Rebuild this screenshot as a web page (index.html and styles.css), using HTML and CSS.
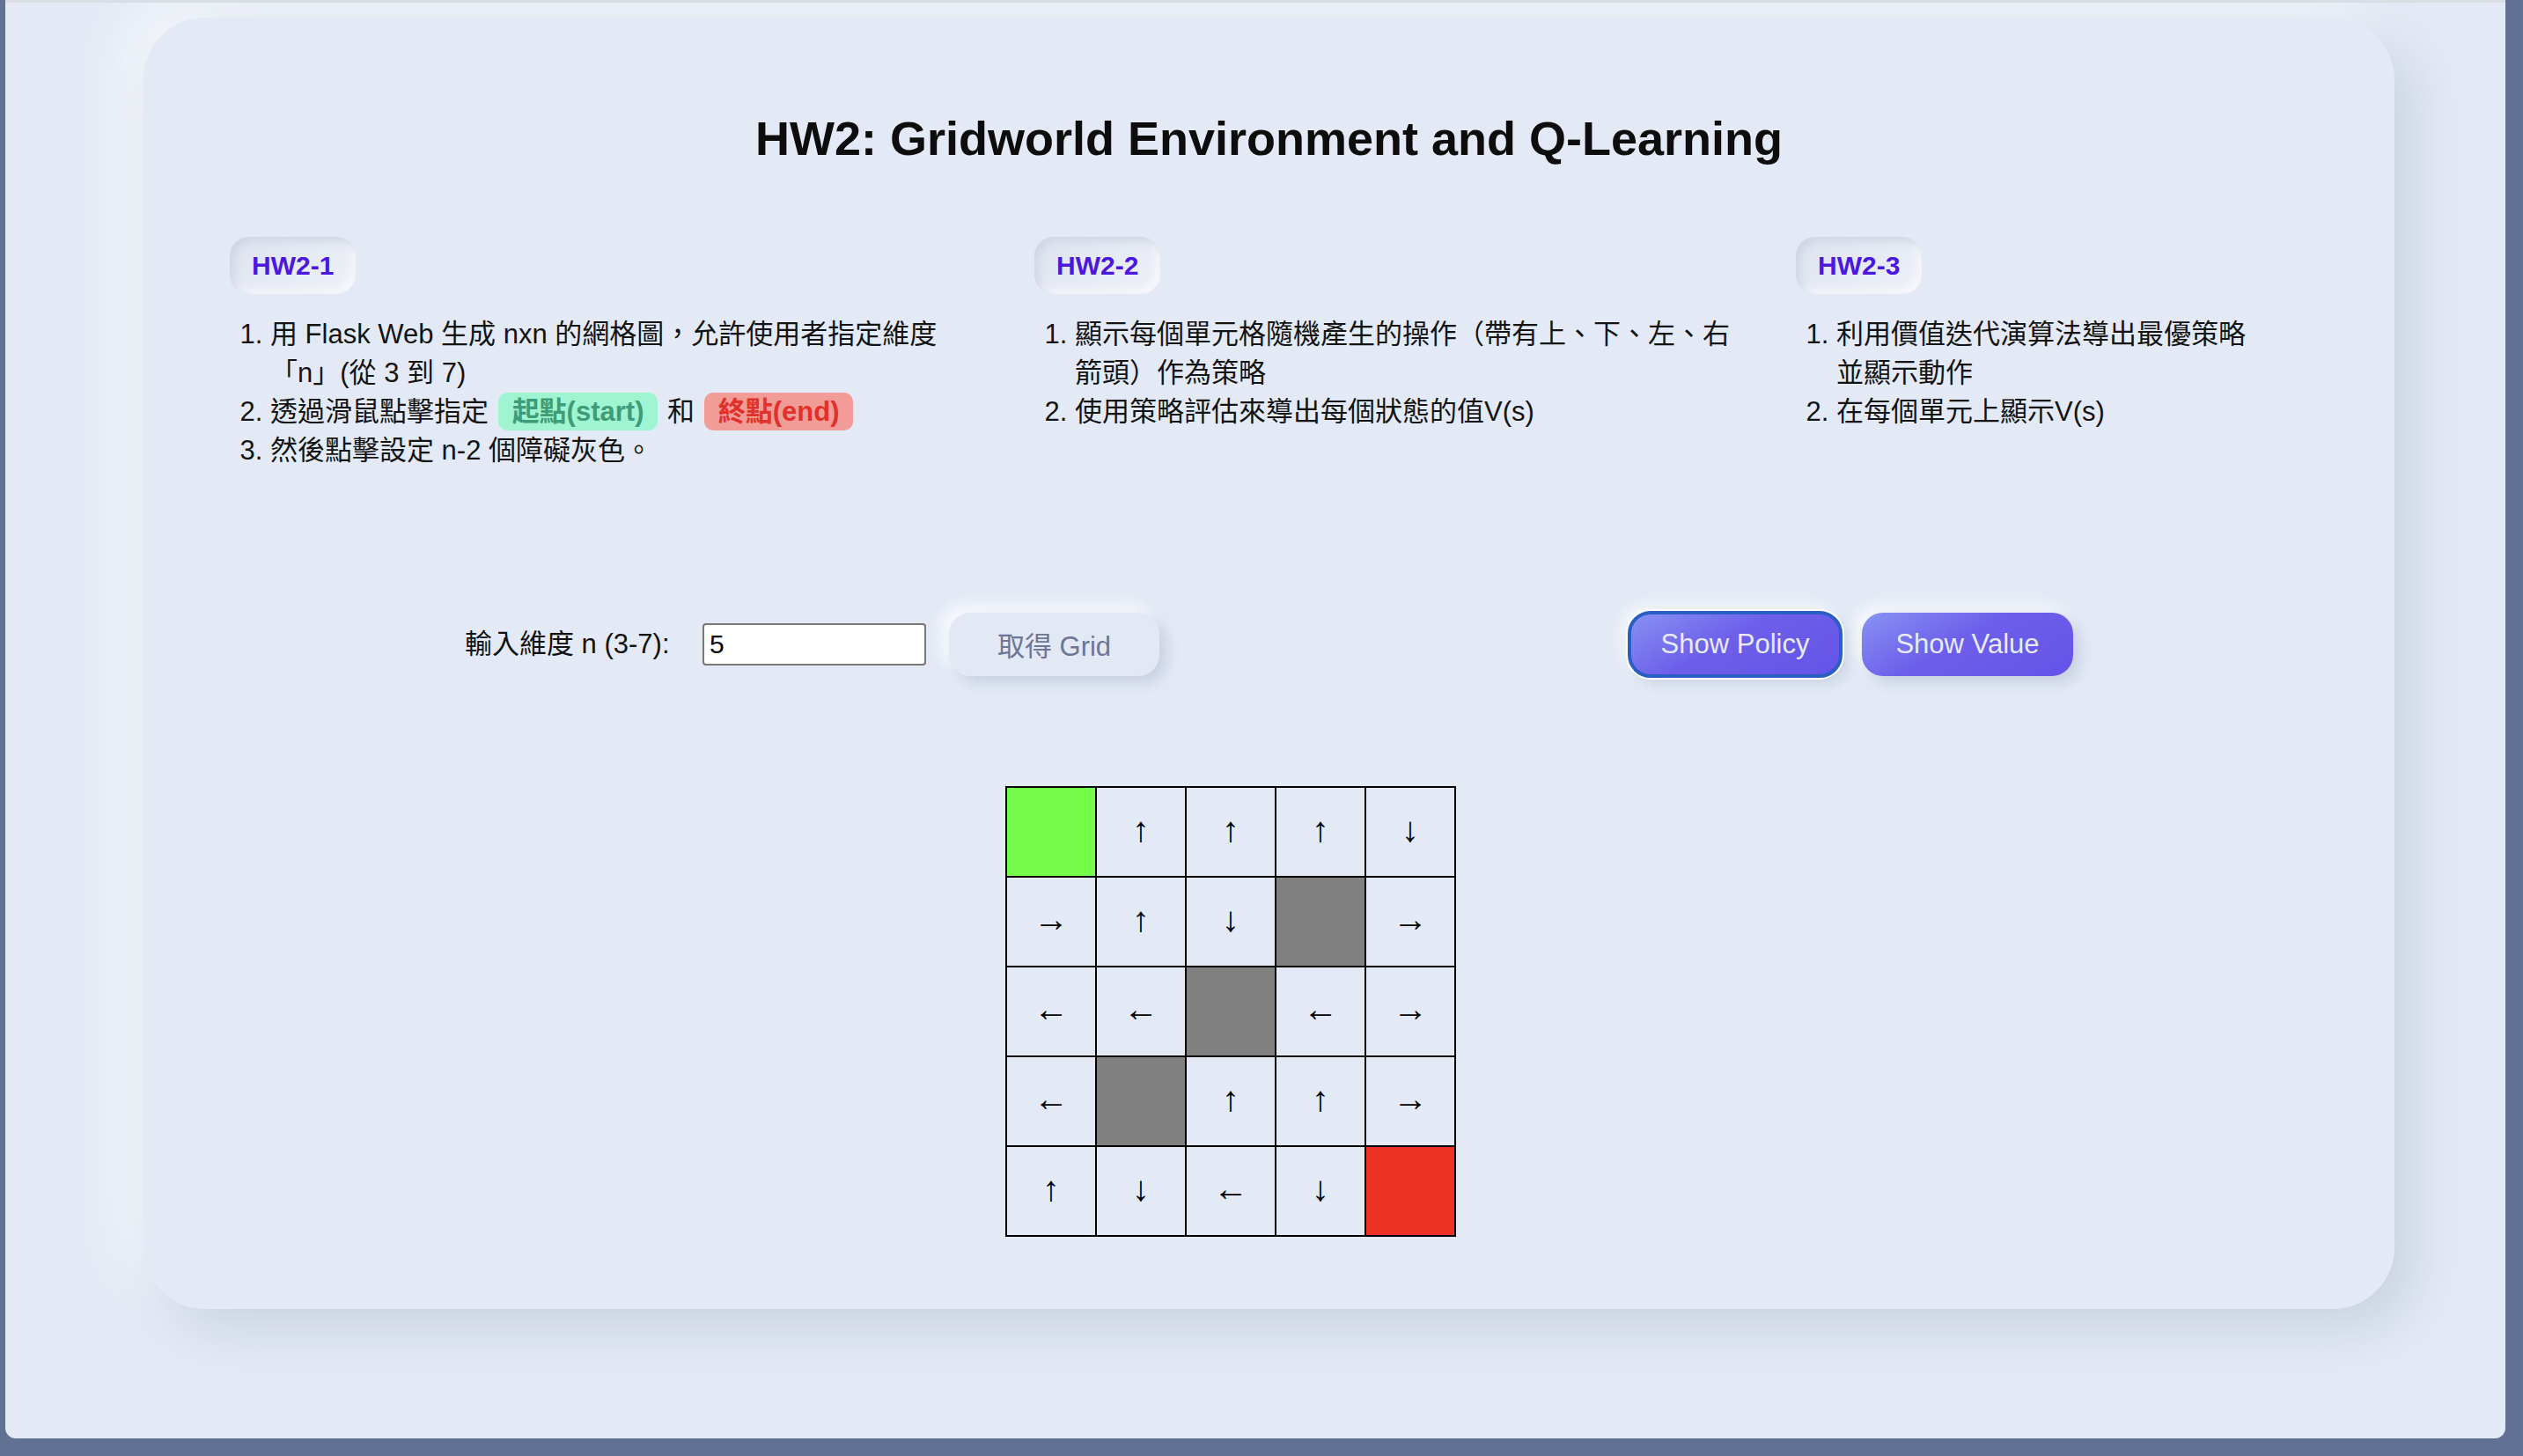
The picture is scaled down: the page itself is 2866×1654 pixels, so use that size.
FILE: index.html
```html
<!DOCTYPE html>
<html lang="zh-Hant">
<head>
<meta charset="utf-8">
<title>HW2: Gridworld Environment and Q-Learning</title>
<link rel="stylesheet" href="styles.css">
</head>
<body>
<div class="window">
  <main class="card">
    <h1 class="title">HW2: Gridworld Environment and Q-Learning</h1>

    <section class="tasks">
      <div class="task task--1">
        <span class="badge">HW2-1</span>
        <ol class="steps">
          <li>用 Flask Web 生成 nxn 的網格圖，允許使用者指定維度「n」(從 3 到 7)</li>
          <li>透過滑鼠點擊指定 <span class="pill pill--start">起點(start)</span> 和 <span class="pill pill--end">終點(end)</span></li>
          <li>然後點擊設定 n-2 個障礙灰色。</li>
        </ol>
      </div>
      <div class="task task--2">
        <span class="badge">HW2-2</span>
        <ol class="steps">
          <li>顯示每個單元格隨機產生的操作（帶有上、下、左、右箭頭）作為策略</li>
          <li>使用策略評估來導出每個狀態的值V(s)</li>
        </ol>
      </div>
      <div class="task task--3">
        <span class="badge">HW2-3</span>
        <ol class="steps">
          <li>利用價值迭代演算法導出最優策略並顯示動作</li>
          <li>在每個單元上顯示V(s)</li>
        </ol>
      </div>
    </section>

    <section class="controls">
      <div class="controls__group">
        <label class="dim-label" for="dim">輸入維度 n (3-7):</label>
        <input id="dim" class="dim-input" type="text" value="5">
        <button class="btn btn--soft" type="button">取得 Grid</button>
      </div>
      <div class="controls__group controls__group--actions">
        <button class="btn btn--primary btn--focused" type="button">Show Policy</button>
        <button class="btn btn--primary" type="button">Show Value</button>
      </div>
    </section>

    <div class="board-wrap">
      <div class="board">
        <div class="cell cell--start"></div>
        <div class="cell">↑</div>
        <div class="cell">↑</div>
        <div class="cell">↑</div>
        <div class="cell">↓</div>

        <div class="cell">→</div>
        <div class="cell">↑</div>
        <div class="cell">↓</div>
        <div class="cell cell--wall"></div>
        <div class="cell">→</div>

        <div class="cell">←</div>
        <div class="cell">←</div>
        <div class="cell cell--wall"></div>
        <div class="cell">←</div>
        <div class="cell">→</div>

        <div class="cell">←</div>
        <div class="cell cell--wall"></div>
        <div class="cell">↑</div>
        <div class="cell">↑</div>
        <div class="cell">→</div>

        <div class="cell">↑</div>
        <div class="cell">↓</div>
        <div class="cell">←</div>
        <div class="cell">↓</div>
        <div class="cell cell--end"></div>
      </div>
    </div>
  </main>
</div>
</body>
</html>
```

FILE: styles.css
```css
html, body {
  margin: 0;
  padding: 0;
}

body {
  height: 1654px;
  overflow: hidden;
  background: #607194;
  font-family: "Liberation Sans", "Noto Sans CJK TC", sans-serif;
  color: #111;
}

.window {
  box-sizing: border-box;
  width: 2840px;
  height: 1634px;
  margin-left: 6px;
  padding: 17px 0 0 157px;
  background: #e3eaf5;
  border-top: 3px solid #d9dde4;
  border-radius: 0 0 12px 12px;
  overflow: hidden;
}

.card {
  box-sizing: border-box;
  width: 2557px;
  height: 1467px;
  padding: 105px 98px 0;
  background: #e3eaf5;
  border-radius: 70px;
  box-shadow: 22px 22px 60px #c9d1e1, -22px -22px 60px #f6f8fc;
}

.title {
  margin: 0;
  font-size: 54px;
  line-height: 64px;
  font-weight: 700;
  text-align: center;
  color: #0d0d0d;
}

/* task columns */
.tasks {
  display: flex;
  margin-top: 80px;
}

.task {
  display: flex;
  flex-direction: column;
  align-items: flex-start;
}

.task--1 { width: 836px; margin-right: 78px; }
.task--2 { width: 806px; margin-right: 59px; }
.task--3 { width: 526px; }

.badge {
  box-sizing: border-box;
  height: 65px;
  padding: 0 25px;
  line-height: 65px;
  border-radius: 22px;
  font-size: 30px;
  font-weight: 700;
  color: #4b18e0;
  background: linear-gradient(145deg, #dde3ef, #eef1f8);
  box-shadow: inset 5px 5px 10px #d0d6e4, inset -5px -5px 10px #f7f8fc;
}

.steps {
  margin: 24px 0 0;
  padding-left: 46px;
  font-size: 31px;
  line-height: 44px;
  color: #141414;
}

.pill {
  display: inline-block;
  height: 43px;
  line-height: 43px;
  padding: 0 16px;
  margin: 0 2px;
  border-radius: 10px;
  font-weight: 700;
  vertical-align: top;
}

.pill--start {
  background: #9ff5d1;
  color: #3f9c78;
}

.pill--end {
  background: #f29c98;
  color: #e2302b;
}

/* controls */
.controls {
  display: flex;
  justify-content: space-around;
  align-items: center;
  height: 72px;
  margin-top: 162px;
}

.controls__group {
  display: flex;
  align-items: center;
}

.controls__group--actions {
  gap: 24px;
}

.dim-label {
  display: inline-block;
  width: 247px;
  white-space: nowrap;
  font-size: 31px;
  line-height: 40px;
  margin: 0 23px 0 0;
  color: #111;
}

.dim-input {
  box-sizing: border-box;
  width: 254px;
  height: 48px;
  margin-right: 26px;
  padding: 0 6px;
  border: 2px solid #777;
  border-radius: 4px;
  background: #fff;
  font-family: "Liberation Sans", sans-serif;
  font-size: 30px;
  color: #000;
}

.btn {
  box-sizing: border-box;
  width: 240px;
  height: 72px;
  border: none;
  border-radius: 24px;
  font-family: "Liberation Sans", "Noto Sans CJK TC", sans-serif;
  font-size: 31px;
  cursor: pointer;
}

.btn--soft {
  width: 239px;
  padding-bottom: 2px;
  color: #6c7696;
  background: #e3e9f4;
  box-shadow: 8px 8px 16px #c9d0e2, -8px -8px 16px #f9fbfe;
}

.btn--primary {
  color: #e6ebf7;
  background: linear-gradient(150deg, #8893f4 0%, #6d5fea 45%, #6553e8 100%);
  box-shadow: 8px 8px 16px #c9d0e2, -8px -8px 16px #f6f8fc;
}

.btn--focused {
  outline: 4px solid #2a5ec5;
  outline-offset: -2px;
  box-shadow: 0 0 0 4px #ffffff, 8px 8px 16px #c9d0e2, -8px -8px 16px #f6f8fc;
}

/* board */
.board-wrap {
  display: flex;
  justify-content: center;
  padding-right: 87px;
  margin-top: 125px;
}

.board {
  display: grid;
  grid-template-columns: repeat(5, 102px);
  border: 1px solid #000;
}

.cell {
  box-sizing: border-box;
  width: 102px;
  height: 102px;
  padding-bottom: 6px;
  border: 1px solid #000;
  display: flex;
  align-items: center;
  justify-content: center;
  font-family: "Liberation Sans", "DejaVu Sans", sans-serif;
  font-size: 40px;
  line-height: 1;
  color: #000;
}

.cell--start { background: #75fb4c; }
.cell--wall { background: #808080; }
.cell--end { background: #ea3323; }
```
